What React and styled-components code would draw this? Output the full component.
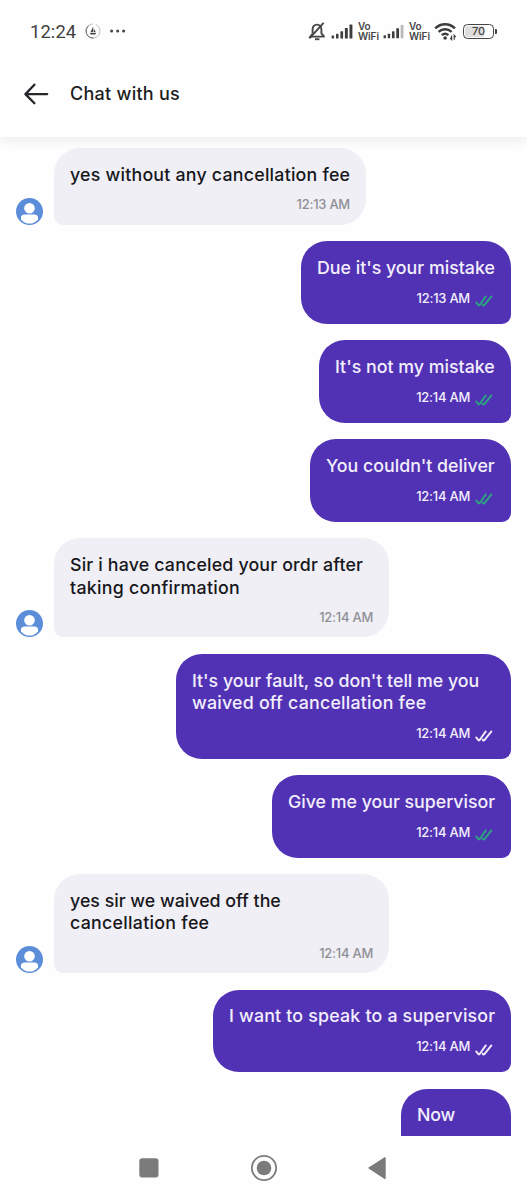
import React from "react";
import styled, { createGlobalStyle } from "styled-components";

const messages = [
  { lines: [["yes without any cancellation fee", 0.22]], time: "12:13 AM", width: 312 },
  { mine: true, lines: [["Due it's your mistake", -0.01]], time: "12:13 AM", width: 210, read: true },
  { mine: true, lines: [["It's not my mistake", 0]], time: "12:14 AM", width: 192, read: true },
  { mine: true, lines: [["You couldn't deliver", 0]], time: "12:14 AM", width: 201, read: true },
  {
    lines: [["Sir i have canceled your ordr after", 0.17], ["taking confirmation", 0.26]],
    time: "12:14 AM",
    width: 335,
  },
  {
    mine: true,
    lines: [["It's your fault, so don't tell me you", -0.02], ["waived off cancellation fee", 0.22]],
    time: "12:14 AM",
    width: 335,
  },
  { mine: true, lines: [["Give me your supervisor", -0.02]], time: "12:14 AM", width: 239, read: true },
  {
    lines: [["yes sir we waived off the", 0], ["cancellation fee", 0.28]],
    time: "12:14 AM",
    width: 335,
  },
  { mine: true, lines: [["I want to speak to a supervisor", 0.2]], time: "12:14 AM", width: 298 },
  { mine: true, lines: [["Now", -0.15]], width: 110 },
];

function BellOff() {
  return (
    <svg width="18" height="20" viewBox="0 0 18 20" fill="none" stroke="#454545" strokeWidth="1.9">
      <path d="M4.6 12.6V8.4C4.6 5.6 6.4 3.6 9 3.6C11.6 3.6 13.4 5.6 13.4 8.4V12.4L15.8 15.2V15.6H2.4L4.6 12.8" />
      <path d="M1.4 17.4L15.6 1.8" />
      <path d="M7 18.2H11.4" />
    </svg>
  );
}

function Signal({ weak, width }) {
  return (
    <svg width={width} height="15" viewBox="0 0 22 15" fill="#3d3d3d">
      <rect x="0.6" y="11.4" width="2.5" height="3.2" rx="0.6" />
      <rect x="5" y="9.8" width="2.5" height="4.8" rx="0.6" />
      <rect x="9.4" y="7.2" width="2.7" height="7.4" rx="0.6" />
      <rect x="13.9" y="4" width="2.9" height="10.6" rx="0.6" />
      <rect x="18.5" y="0.6" width="2.9" height="14" rx="0.6" fill={weak ? "#b9b9b9" : "#3d3d3d"} />
    </svg>
  );
}

function Wifi() {
  return (
    <svg width="23" height="19" viewBox="0 0 23 19" fill="none" stroke="#3d3d3d" strokeWidth="2.4">
      <path d="M1.2 6.4C6.8 0.9 15.4 0.9 21 6.4" />
      <path d="M4.6 9.9C8.4 6.3 13.8 6.3 17.6 9.9" />
      <path d="M7.8 13.1C9.9 11.3 12.3 11.3 14.4 13.1" />
      <circle cx="11.1" cy="16" r="1.8" fill="#3d3d3d" stroke="none" />
      <path d="M17.6 13.4V17.6L16 15.9M20.2 17.8V13.4L21.8 15.2" strokeWidth="1.2" />
    </svg>
  );
}

function Avatar() {
  return (
    <svg width="27" height="27" viewBox="0 0 27 27">
      <circle cx="13.5" cy="13.5" r="13.5" fill="#5b8dd9" />
      <circle cx="13.5" cy="10.2" r="5.3" fill="#fff" />
      <path d="M5 19.4C5 17.5 6.4 16.5 8.6 16.5H18.4C20.6 16.5 22 17.5 22 19.4V21.4C19.9 24.1 17 25.6 13.5 25.6C10 25.6 7.1 24.1 5 21.4Z" fill="#fff" />
    </svg>
  );
}

function Ticks({ read }) {
  return (
    <TickIcon
      width="18"
      height="12"
      viewBox="0 0 18 12"
      fill="none"
      stroke={read ? "#2ba482" : "#f2effc"}
      strokeWidth="1.9"
      strokeLinecap="round"
      strokeLinejoin="round"
    >
      <path d="M1.2 7.4L3.6 10.4L4.5 10.2L10.8 1.4" />
      <path d="M7.6 9.6L8.4 10.5L9.4 10.2L16.4 1.4" />
    </TickIcon>
  );
}

function Message({ mine, lines, time, width, read }) {
  return (
    <Row $mine={mine}>
      {!mine && <Avatar />}
      <Bubble $mine={mine} $width={width}>
        {lines.map(([text, tracking]) => (
          <Line key={text} $tracking={tracking}>
            {text}
          </Line>
        ))}
        <Meta $mine={mine}>
          {time}
          {mine && time && <Ticks read={read} />}
        </Meta>
      </Bubble>
    </Row>
  );
}

function App() {
  return (
    <Screen>
      <GlobalStyle />
      <Header>
        <StatusBar>
          <Clock>12:24</Clock>
          <svg width="16" height="16" viewBox="0 0 16 16" fill="none">
            <path d="M10.6 1.5A7 7 0 1 1 8 1" stroke="#b5b5b5" strokeWidth="0.9" />
            <path d="M3.5 2.7A7 7 0 0 0 8.5 15" stroke="#666" strokeWidth="1" />
            <path d="M8.2 3.4V9.2H5.4L8.2 3.4M8.8 5.4L10.8 9.2H8.8ZM4.8 10H11.2L10.2 11.6H5.8Z" fill="#444" />
          </svg>
          <Dots width="18" height="4" viewBox="0 0 18 4" fill="#454545">
            <circle cx="2.6" cy="2" r="1.5" />
            <circle cx="8.7" cy="2" r="1.5" />
            <circle cx="14.6" cy="2" r="1.5" />
          </Dots>
          <StatusIcons>
            <BellOff />
            <Signal width="22" />
            <VoWifi>
              <span>Vo</span>
              <span>WiFi</span>
            </VoWifi>
            <Signal width="21" weak />
            <VoWifi>
              <span>Vo</span>
              <span>WiFi</span>
            </VoWifi>
            <Wifi />
            <Battery>70</Battery>
          </StatusIcons>
        </StatusBar>
        <TitleBar>
          <svg width="26" height="22" viewBox="0 0 26 22" fill="none" stroke="#26262b" strokeWidth="2.3" strokeLinecap="round" strokeLinejoin="round">
            <path d="M11.4 1.7L2.4 11.1L11.4 20.3M2.6 11.1H24.2" />
          </svg>
          <Title>Chat with us</Title>
        </TitleBar>
      </Header>
      <Messages>
        {messages.map((message, i) => (
          <Message key={i} {...message} />
        ))}
      </Messages>
      <NavBar>
        <svg width="20" height="20" viewBox="0 0 20 20">
          <rect x="0.3" y="0.3" width="19.2" height="19.2" rx="3" fill="#7b7b7b" />
        </svg>
        <svg width="26" height="26" viewBox="0 0 26 26">
          <circle cx="13" cy="13" r="12.1" fill="none" stroke="#7b7b7b" strokeWidth="1.8" />
          <circle cx="13" cy="13" r="7.3" fill="#7b7b7b" />
        </svg>
        <svg width="20" height="24" viewBox="0 0 20 24">
          <path d="M1 12L17 1.8V22.4Z" fill="#7b7b7b" stroke="#7b7b7b" strokeWidth="1.4" strokeLinejoin="round" />
        </svg>
      </NavBar>
    </Screen>
  );
}

export default App;

const GlobalStyle = createGlobalStyle`
  * {
    box-sizing: border-box;
  }

  body {
    margin: 0;
    background: #fefefe;
    font-family: Inter, "Liberation Sans", sans-serif;
  }

  svg {
    display: block;
    flex-shrink: 0;
  }
`;

const Screen = styled.div`
  width: 527px;
  height: 1200px;
  display: flex;
  flex-direction: column;
  overflow: hidden;
  background: #fefefe;
`;

const Header = styled.header`
  height: 137px;
  flex-shrink: 0;
  background: #fefefe;
  box-shadow: 0 4px 12px rgba(0, 0, 0, 0.07);
  z-index: 1;
`;

const StatusBar = styled.div`
  height: 62px;
  padding: 0 29px 0 30px;
  display: flex;
  align-items: center;
`;

const Clock = styled.span`
  width: 55px;
  font-family: Roboto, sans-serif;
  font-size: 18.4px;
  letter-spacing: 0.1px;
  color: #404040;
`;

const Dots = styled.svg`
  margin-left: 8px;
`;

const StatusIcons = styled.div`
  margin-left: auto;
  display: flex;
  align-items: center;
  gap: 5px;
`;

const VoWifi = styled.div`
  width: 20px;
  display: flex;
  flex-direction: column;
  font-size: 10px;
  line-height: 10px;
  font-weight: 600;
  letter-spacing: -0.1px;
  color: #454545;
`;

const Battery = styled.div`
  position: relative;
  width: 31px;
  height: 15px;
  margin: 0 4px 0 1px;
  display: flex;
  justify-content: center;
  align-items: center;
  border: 1.6px solid #454545;
  border-radius: 4.5px;
  background: linear-gradient(90deg, #dedede 68%, #fefefe 68%);
  box-shadow: inset 0 0 0 1px #fefefe;
  font-size: 11px;
  font-weight: 500;
  color: #454545;

  &::after {
    content: "";
    position: absolute;
    right: -4px;
    width: 2px;
    height: 5px;
    border-radius: 0 1px 1px 0;
    background: #454545;
  }
`;

const TitleBar = styled.div`
  height: 63px;
  padding-left: 23px;
  display: flex;
  align-items: center;
  gap: 21px;
`;

const Title = styled.h1`
  margin: -1px 0 0;
  font-size: 18px;
  font-weight: 500;
  letter-spacing: 0.26px;
  color: #1d1d22;
`;

const Messages = styled.main`
  height: 999px;
  flex-shrink: 0;
  padding: 11.3px 16px 0;
  display: flex;
  flex-direction: column;
  gap: 16.5px;
  overflow: hidden;
`;

const Row = styled.div`
  flex-shrink: 0;
  display: flex;
  align-items: flex-end;
  justify-content: ${({ $mine }) => ($mine ? "flex-end" : "flex-start")};
  gap: 11px;
`;

const Bubble = styled.div`
  width: ${({ $width }) => $width}px;
  padding: ${({ $mine }) => ($mine ? "15.8px 16px 18px" : "15.8px 16px 12.4px")};
  border-radius: ${({ $mine }) => ($mine ? "26px 26px 9px 26px" : "26px 26px 26px 9px")};
  background: ${({ $mine }) => ($mine ? "#5232b4" : "#f0eff5")};
  color: ${({ $mine }) => ($mine ? "#f2effc" : "#17171c")};
`;

const Line = styled.p`
  margin: 0;
  font-size: 17.8px;
  line-height: 22.5px;
  font-weight: 500;
  letter-spacing: ${({ $tracking }) => $tracking}px;
  white-space: nowrap;
`;

const Meta = styled.div`
  height: 16px;
  margin-top: ${({ $mine }) => ($mine ? "10.2px" : "9.8px")};
  display: flex;
  justify-content: flex-end;
  align-items: center;
  font-size: 13px;
  line-height: 16px;
  font-weight: 500;
  letter-spacing: -0.25px;
  color: ${({ $mine }) => ($mine ? "#f2effc" : "#8f8f95")};
`;

const TickIcon = styled.svg`
  margin: 7px 2px 0 5px;
`;

const NavBar = styled.nav`
  height: 64px;
  padding: 0 139px;
  display: flex;
  align-items: center;
  justify-content: space-between;
`;
